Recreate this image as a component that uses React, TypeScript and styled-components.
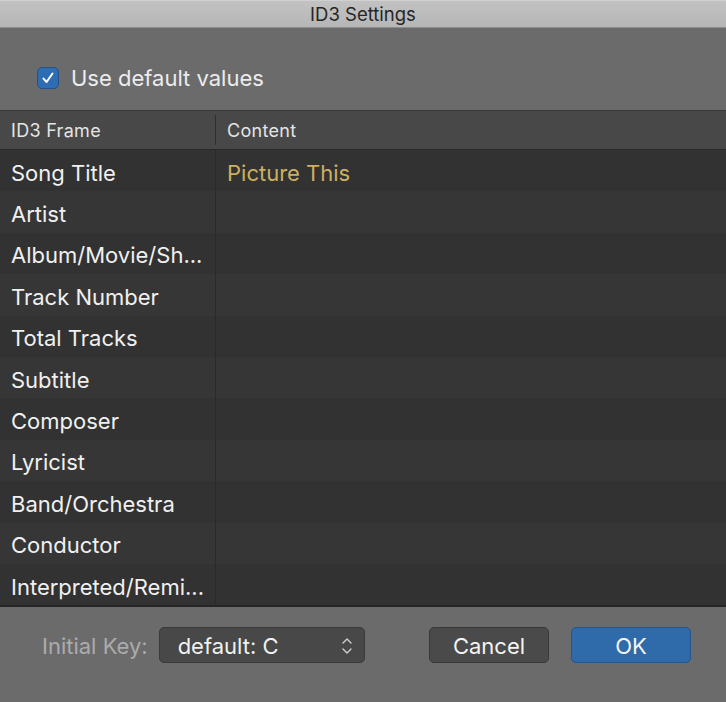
import React from 'react';
import styled, { createGlobalStyle } from 'styled-components';

const GlobalStyle = createGlobalStyle`
  html, body {
    margin: 0;
    padding: 0;
    background: #6b6b6b;
  }
  body {
    font-family: Inter, "Noto Sans", "Liberation Sans", sans-serif;
  }
`;

const frames = [
  { name: 'Song Title', value: 'Picture This' },
  { name: 'Artist' },
  { name: 'Album/Movie/Sh...' },
  { name: 'Track Number' },
  { name: 'Total Tracks' },
  { name: 'Subtitle' },
  { name: 'Composer' },
  { name: 'Lyricist' },
  { name: 'Band/Orchestra' },
  { name: 'Conductor' },
  { name: 'Interpreted/Remi...' },
];

const App: React.FC = () => {
  return (
    <>
      <GlobalStyle />
      <Window>
        <TitleBar>ID3 Settings</TitleBar>
        <TopArea>
          <CheckRow>
            <CheckBox>
              <svg width="14" height="14" viewBox="0 0 14 14">
                <path
                  d="M2.5 7.6 L5.6 11 L11.5 2.5"
                  fill="none"
                  stroke="#fff"
                  strokeWidth="2"
                  strokeLinecap="round"
                  strokeLinejoin="round"
                />
              </svg>
            </CheckBox>
            <CheckLabel>Use default values</CheckLabel>
          </CheckRow>
        </TopArea>
        <Table>
          <HeaderRow>
            <HeaderCell>ID3 Frame</HeaderCell>
            <HeaderCell divided>Content</HeaderCell>
          </HeaderRow>
          <Body>
            {frames.map((f, i) => (
              <Row key={f.name} odd={i % 2 === 1}>
                <NameCell>{f.name}</NameCell>
                <ValueCell>{f.value}</ValueCell>
              </Row>
            ))}
          </Body>
        </Table>
        <Footer>
          <KeyLabel>Initial Key:</KeyLabel>
          <Popup>
            <span>default: C</span>
            <svg width="14" height="22" viewBox="0 0 14 22">
              <path
                d="M3 8 L7 4 L11 8 M3 14 L7 18 L11 14"
                fill="none"
                stroke="#cfcfcf"
                strokeWidth="1.4"
                strokeLinecap="round"
                strokeLinejoin="round"
              />
            </svg>
          </Popup>
          <Spacer />
          <Button>Cancel</Button>
          <Button primary>OK</Button>
        </Footer>
      </Window>
    </>
  );
};

const Window = styled.div`
  width: 726px;
  height: 702px;
  display: flex;
  flex-direction: column;
  background: #6b6b6b;
  overflow: hidden;
`;

const TitleBar = styled.div`
  height: 28px;
  box-sizing: border-box;
  display: flex;
  align-items: center;
  justify-content: center;
  background: linear-gradient(#c2c2c2, #b6b6b6);
  border-top: 1px solid #d0d0d0;
  border-bottom: 1px solid #8e8e8e;
  color: #262626;
  font-size: 18.5px;
`;

const TopArea = styled.div`
  height: 82px;
  display: flex;
  align-items: flex-start;
  padding: 37px 0 0 37px;
  box-sizing: border-box;
`;

const CheckRow = styled.div`
  display: flex;
  align-items: center;
  gap: 12px;
`;

const CheckBox = styled.div`
  width: 22px;
  height: 22px;
  box-sizing: border-box;
  border-radius: 5px;
  background: #2f6db3;
  border: 1px solid #24528a;
  display: flex;
  align-items: center;
  justify-content: center;
`;

const CheckLabel = styled.span`
  color: #ececec;
  font-size: 22px;
`;

const Table = styled.div`
  display: flex;
  flex-direction: column;
  border-top: 1px solid #3a3a3a;
  border-bottom: 2px solid #262626;
`;

const HeaderRow = styled.div`
  height: 38px;
  display: grid;
  grid-template-columns: 215px 1fr;
  align-items: center;
  background: #484848;
  border-bottom: 1px solid #2a2a2a;
`;

const HeaderCell = styled.div<{ divided?: boolean }>`
  color: #e4e4e4;
  font-size: 18px;
  letter-spacing: 0.3px;
  padding-left: 11px;
  height: 30px;
  display: flex;
  align-items: center;
  border-left: ${(p) => (p.divided ? '1px solid #2e2e2e' : 'none')};
`;

const Body = styled.div`
  display: flex;
  flex-direction: column;
`;

const Row = styled.div<{ odd: boolean }>`
  height: 41.4px;
  display: grid;
  grid-template-columns: 215px 1fr;
  background: ${(p) => (p.odd ? '#363636' : '#323232')};
`;

const NameCell = styled.div`
  display: flex;
  align-items: center;
  padding: 4px 0 0 11px;
  color: #f0f0f0;
  font-size: 22px;
  white-space: nowrap;
  overflow: hidden;
`;

const ValueCell = styled.div`
  display: flex;
  align-items: center;
  padding: 4px 0 0 11px;
  border-left: 1px solid #2a2a2a;
  color: #ccb062;
  font-size: 22px;
`;

const Footer = styled.div`
  display: flex;
  align-items: flex-start;
  padding: 20px 35px 0 42px;
`;

const KeyLabel = styled.span`
  color: #ababab;
  font-size: 22px;
  line-height: 38px;
  margin-right: 11px;
`;

const Popup = styled.div`
  width: 206px;
  height: 36px;
  box-sizing: border-box;
  border-radius: 5px;
  background: #484848;
  border: 1px solid #3a3a3a;
  display: flex;
  align-items: center;
  justify-content: space-between;
  padding: 2px 10px 0 18px;
  color: #f0f0f0;
  font-size: 22px;
`;

const Spacer = styled.div`
  flex: 1;
`;

const Button = styled.button<{ primary?: boolean }>`
  width: 120px;
  height: 36px;
  box-sizing: border-box;
  border-radius: 5px;
  margin-left: 22px;
  font-family: inherit;
  font-size: 22px;
  color: #f4f4f4;
  background: ${(p) => (p.primary ? '#2f6aab' : '#4a4a4a')};
  border: 1px solid ${(p) => (p.primary ? '#25548a' : '#383838')};
  padding: 2px 0 0;
`;

export default App;
